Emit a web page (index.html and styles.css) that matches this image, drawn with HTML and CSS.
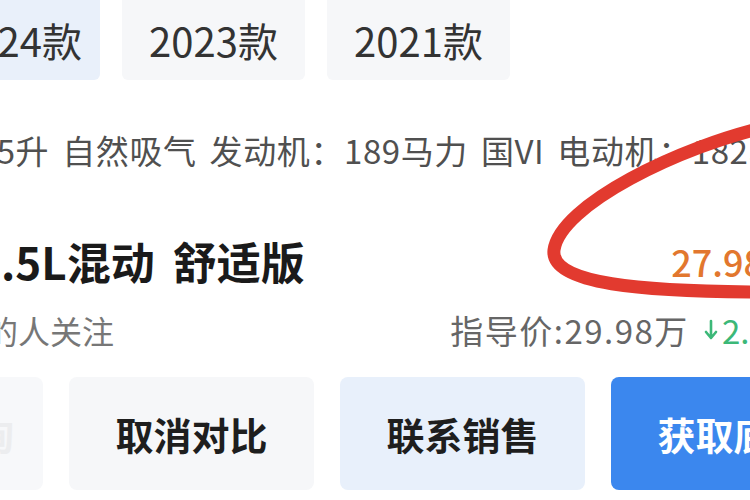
FILE: index.html
```html
<!DOCTYPE html>
<html lang="zh-CN">
<head>
<meta charset="utf-8">
<title>车型对比</title>
<link rel="stylesheet" href="styles.css">
</head>
<body>
<div class="page">
  <div class="tabs">
    <div class="tab active">2024款</div>
    <div class="tab">2023款</div>
    <div class="tab">2021款</div>
  </div>
  <div class="specs"><span class="specs-text">2.5升 自然吸气 发动机：189马力 国VI 电动机：182马力</span></div>
  <div class="title-row">
    <span class="title">2.5L混动 舒适版</span>
    <span class="price">27.98万</span>
  </div>
  <div class="meta-row">
    <span class="follow">的人关注</span>
    <span class="guide"><span class="guide-text">指导价:29.98万</span><span class="drop"><svg class="arrow" viewBox="0 0 14 24" width="14" height="24"><path d="M7 3 V20 M2 14 L7 20 L12 14" fill="none" stroke="#3cb878" stroke-width="2.6" stroke-linecap="round" stroke-linejoin="round"/></svg>2.00万</span></span>
  </div>
  <div class="btns">
    <div class="btn btn-ghost">咨询</div>
    <div class="btn btn-gray">取消对比</div>
    <div class="btn btn-light">联系销售</div>
    <div class="btn btn-blue">获取底价</div>
  </div>
</div>
<svg class="mark" viewBox="0 0 750 500" width="750" height="500">
  <path d="M770 126 C680 146 560 205 554 250 C550 284 640 292 770 292" fill="none" stroke="#e23a2f" stroke-width="13" stroke-linecap="round"/>
</svg>
</body>
</html>
```
FILE: styles.css
```css
html, body {
  margin: 0;
  padding: 0;
}
body {
  width: 750px;
  height: 500px;
  overflow: hidden;
  position: relative;
  background: #ffffff;
  font-family: "Noto Sans CJK SC", "Noto Sans", sans-serif;
  color: #222;
}
.page {
  width: 860px;
}
.tabs {
  display: flex;
  gap: 22px;
  height: 80px;
  margin-left: -83px;
}
.tab {
  width: 183px;
  height: 80px;
  display: flex;
  align-items: center;
  justify-content: center;
  font-size: 40px;
  color: #333;
  background: #f6f7f9;
  border-radius: 0 0 6px 6px;
  line-height: 1;
}
.tab.active {
  background: #e9f0fa;
  padding-left: 18px;
  box-sizing: border-box;
}
.specs {
  height: 110px;
  padding-top: 30px;
  box-sizing: border-box;
  display: flex;
  align-items: center;
}
.specs-text {
  font-size: 33px;
  color: #505050;
  white-space: nowrap;
  margin-left: -32px;
  word-spacing: 5px;
  letter-spacing: 0.6px;
  line-height: 1;
}
.title-row {
  height: 105px;
  padding-top: 36px;
  padding-right: 60px;
  box-sizing: border-box;
  display: flex;
  align-items: center;
  justify-content: space-between;
}
.title {
  font-size: 44px;
  font-weight: 700;
  color: #1a1a1a;
  margin-left: -25px;
  word-spacing: 8px;
  line-height: 1;
  white-space: nowrap;
}
.price {
  font-size: 36px;
  font-weight: 500;
  color: #e2772e;
  line-height: 1;
  white-space: nowrap;
}
.meta-row {
  height: 65px;
  padding-top: 5px;
  padding-right: 41px;
  box-sizing: border-box;
  display: flex;
  align-items: center;
  justify-content: space-between;
}
.follow {
  font-size: 32px;
  color: #777;
  margin-left: -14px;
  line-height: 1;
}
.guide {
  font-size: 33px;
  color: #666;
  line-height: 1;
  white-space: nowrap;
  display: flex;
  align-items: center;
}
.guide-text {
  letter-spacing: 1.5px;
}
.drop {
  color: #3cb878;
  margin-left: 15px;
  display: flex;
  align-items: center;
  gap: 4px;
}
.arrow {
  display: block;
}
.btns {
  display: flex;
  gap: 26px;
  margin-top: 17px;
  margin-left: -202px;
  height: 113px;
}
.btn {
  width: 245px;
  flex: none;
  border-radius: 8px;
  display: flex;
  align-items: center;
  justify-content: center;
  font-size: 38px;
  font-weight: 700;
  line-height: 1;
}
.btn-ghost {
  background: #f7f8fa;
  color: #ecedef;
  justify-content: flex-end;
  padding-right: 29px;
  box-sizing: border-box;
}
.btn-gray {
  background: #f6f7f9;
  color: #1e1e1e;
}
.btn-light {
  background: #e8f0fb;
  color: #1e1e1e;
}
.btn-blue {
  background: #3b87ee;
  color: #ffffff;
}
.mark {
  position: absolute;
  top: 0;
  left: 0;
  pointer-events: none;
}
```
